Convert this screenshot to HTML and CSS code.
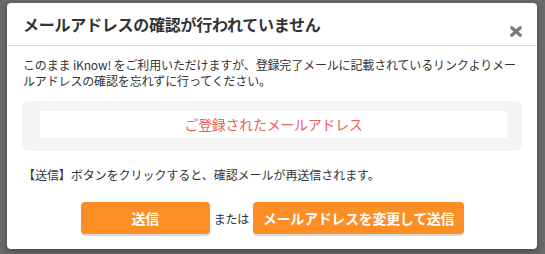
FILE: index.html
```html
<!DOCTYPE html>
<html lang="ja">
<head>
<meta charset="utf-8">
<link rel="stylesheet" href="styles.css">
</head>
<body>
<div class="overlay">
  <div class="modal">
    <div class="modal-header">
      <h1 class="modal-title">メールアドレスの確認が行われていません</h1>
      <svg class="close" width="12" height="11" viewBox="0 0 12 11"><path d="M1.8 1.8 L10.2 9.2 M10.2 1.8 L1.8 9.2" stroke="#777" stroke-width="3.2" stroke-linecap="round"/></svg>
    </div>
    <div class="modal-body">
      <p class="lead">このまま iKnow! をご利用いただけますが、登録完了メールに記載されているリンクよりメー<br>ルアドレスの確認を忘れずに行ってください。</p>
      <div class="email-box">
        <div class="email-field">ご登録されたメールアドレス</div>
      </div>
      <p class="notice">【送信】ボタンをクリックすると、確認メールが再送信されます。</p>
      <div class="actions">
        <button class="btn btn-send">送信</button>
        <span class="or">または</span>
        <button class="btn">メールアドレスを変更して送信</button>
      </div>
    </div>
  </div>
</div>
</body>
</html>
```
FILE: styles.css
```css
* { box-sizing: border-box; }
html, body { margin: 0; padding: 0; }
body {
  background: #6a6a6a;
  font-family: "Noto Sans CJK JP", "Noto Sans", sans-serif;
  color: #333;
  width: 545px;
  height: 254px;
  overflow: hidden;
}
.overlay {
  padding: 3px 7px 0 7px;
}
.modal {
  width: 530px;
  height: 246px;
  background: #fff;
  border-radius: 4px;
  box-shadow: 0 2px 6px rgba(0,0,0,.35);
}
.modal-header {
  display: flex;
  align-items: center;
  justify-content: space-between;
  height: 43px;
  padding: 0 15px 0 16px;
  border-bottom: 1px solid #d8d8d8;
}
.modal-title {
  margin: 0;
  font-size: 16px;
  font-weight: bold;
  line-height: 42px;
  color: #333;
  letter-spacing: -0.25px;
}
.close {
  margin-top: 14px;
}
.modal-body {
  padding: 11px 15px 0 16px;
}
.lead {
  margin: 0;
  font-size: 12px;
  line-height: 16px;
  letter-spacing: -0.15px;
  white-space: nowrap;
}
.email-box {
  margin: 12px 0 0 -1px;
  background: #f4f4f4;
  border-radius: 6px;
  padding: 10px 15px 13px 18px;
}
.email-field {
  height: 27px;
  background: #fff;
  color: #f0605c;
  font-size: 14px;
  line-height: 27px;
  text-align: center;
  letter-spacing: -0.3px;
}
.notice {
  margin: 16px 0 0 0;
  font-size: 12px;
  line-height: 16px;
  letter-spacing: -0.05px;
}
.actions {
  margin-top: 19px;
  display: flex;
  justify-content: center;
  align-items: center;
  gap: 4px;
}
.or {
  font-size: 12px;
  letter-spacing: -0.3px;
}
.btn {
  height: 32px;
  border: 0;
  border-radius: 4px;
  background: #fd8e23;
  color: #fff;
  font-family: inherit;
  font-size: 14px;
  font-weight: bold;
  padding: 0 10px;
  letter-spacing: -0.3px;
  box-shadow: 0 2px 1px rgba(0,0,0,.15);
}
.btn-send {
  width: 129px;
}
```
